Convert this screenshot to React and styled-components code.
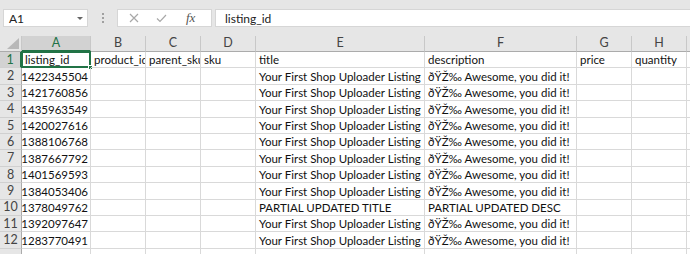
import React from "react";
import styled, { createGlobalStyle, css } from "styled-components";

const Global = createGlobalStyle`
  html, body { margin: 0; padding: 0; background: #fff; overflow: hidden; }
  #root { width: 690px; height: 254px; overflow: hidden; }
`;

const FONT = `"Lato", "Open Sans", sans-serif`;
const GREEN = "#217346";
const FS = "11.5px";

const Page = styled.div`
  width: 690px;
  height: 254px;
  overflow: hidden;
  display: flex;
  flex-direction: column;
  font-family: ${FONT};
  background: #fff;
`;

const TopBar = styled.div`
  flex: 0 0 36px;
  height: 36px;
  box-sizing: border-box;
  background: #e6e6e6;
  display: flex;
  align-items: flex-start;
  padding: 9px 0 0 3px;
`;

const NameBox = styled.div`
  width: 85px;
  height: 18px;
  box-sizing: border-box;
  background: #fff;
  border: 1px solid #d6d6d6;
  display: flex;
  align-items: center;
  justify-content: space-between;
  padding: 0 4px 0 5px;
  font-size: 12px;
  color: #222;
`;

const Caret = styled.span`
  width: 0;
  height: 0;
  border-left: 3px solid transparent;
  border-right: 3px solid transparent;
  border-top: 3px solid #666;
  margin-top: 1px;
`;

const Grip = styled.div`
  width: 29px;
  height: 18px;
  display: flex;
  flex-direction: column;
  align-items: center;
  justify-content: center;
  gap: 2px;
  & > i {
    width: 2px;
    height: 2px;
    background: #a0a0a0;
    display: block;
  }
`;

const FxBox = styled.div`
  width: 95px;
  height: 18px;
  box-sizing: border-box;
  background: #fff;
  border: 1px solid #d6d6d6;
  display: flex;
  align-items: center;
  padding-left: 11px;
  gap: 17px;
`;

const Fx = styled.span`
  font-family: "Liberation Serif", "DejaVu Serif", serif;
  font-style: italic;
  font-size: 13px;
  color: #555;
  margin-left: 2px;
`;

const FormulaInput = styled.div`
  flex: 1;
  margin-left: 3px;
  height: 18px;
  box-sizing: border-box;
  background: #fff;
  border: 1px solid #d6d6d6;
  border-right: none;
  display: flex;
  align-items: center;
  padding-left: 9px;
  font-size: 12px;
  color: #222;
`;

const Grid = styled.div`
  flex: 0 0 auto;
  display: grid;
  grid-template-columns: 22px 69px 55px 55px 55px 169px 152px 55px 55px 1fr;
  grid-template-rows: 16px;
  grid-auto-rows: 16.4px;
`;

const HeadCell = styled.div`
  background: ${(p) => (p.$active ? "#d2d2d2" : "#e6e6e6")};
  color: ${(p) => (p.$active ? GREEN : "#444")};
  border-right: 1px solid #c8c8c8;
  border-bottom: 1px solid #ababab;
  box-sizing: border-box;
  display: flex;
  align-items: center;
  justify-content: center;
  font-size: 12.5px;
  line-height: 1;
  ${(p) =>
    p.$active &&
    css`
      border-bottom: 2px solid ${GREEN};
    `}
`;

const Corner = styled(HeadCell)`
  position: relative;
  &::after {
    content: "";
    position: absolute;
    right: 2px;
    bottom: 2px;
    width: 0;
    height: 0;
    border-left: 12px solid transparent;
    border-bottom: 11px solid #b8b8b8;
  }
`;

const RowHead = styled.div`
  background: ${(p) => (p.$active ? "#d2d2d2" : "#e6e6e6")};
  color: ${(p) => (p.$active ? GREEN : "#444")};
  border-right: ${(p) => (p.$active ? `2px solid ${GREEN}` : "1px solid #ababab")};
  border-bottom: 1px solid #d0d0d0;
  box-sizing: border-box;
  display: flex;
  align-items: center;
  justify-content: center;
  padding-top: 1px;
  font-size: 12.5px;
  line-height: 1;
`;

const Cell = styled.div`
  border-right: 1px solid #d9d9d9;
  border-bottom: 1px solid #d9d9d9;
  box-sizing: border-box;
  overflow: hidden;
  white-space: nowrap;
  font-size: ${FS};
  line-height: 1;
  color: #111;
  display: flex;
  align-items: center;
  justify-content: ${(p) => (p.$num ? "flex-end" : "flex-start")};
  padding: ${(p) => (p.$num ? "1px 2px 0 0" : "1px 0 0 3px")};
  position: relative;
  ${(p) =>
    p.$selected &&
    css`
      overflow: visible;
      &::before {
        content: "";
        position: absolute;
        left: -1px;
        top: -1px;
        right: -1px;
        bottom: -1px;
        border: 2px solid ${GREEN};
        pointer-events: none;
      }
      &::after {
        content: "";
        position: absolute;
        right: -3px;
        bottom: -3px;
        width: 5px;
        height: 5px;
        background: ${GREEN};
        border: 1px solid #fff;
        box-sizing: border-box;
      }
    `}
`;

const TITLE = "Your First Shop Uploader Listing";
const DESC = "\u00F0\u0178\u017D\u2030 Awesome, you did it!";

const rows = [
  ["1422345504", TITLE, DESC],
  ["1421760856", TITLE, DESC],
  ["1435963549", TITLE, DESC],
  ["1420027616", TITLE, DESC],
  ["1388106768", TITLE, DESC],
  ["1387667792", TITLE, DESC],
  ["1401569593", TITLE, DESC],
  ["1384053406", TITLE, DESC],
  ["1378049762", "PARTIAL UPDATED TITLE", "PARTIAL UPDATED DESC"],
  ["1392097647", TITLE, DESC],
  ["1283770491", TITLE, DESC],
];

const letters = ["A", "B", "C", "D", "E", "F", "G", "H", ""];
const headerRow = ["listing_id", "product_id", "parent_sku", "sku", "title", "description", "price", "quantity", ""];

export default function App() {
  return (
    <Page>
      <Global />
      <TopBar>
        <NameBox>
          A1
          <Caret />
        </NameBox>
        <Grip>
          <i />
          <i />
          <i />
        </Grip>
        <FxBox>
          <svg width="10" height="10" viewBox="0 0 10 10">
            <path d="M1 1L9 9M9 1L1 9" stroke="#a8a8a8" strokeWidth="1.2" fill="none" />
          </svg>
          <svg width="11" height="9" viewBox="0 0 11 9">
            <path d="M1 4.5L4 7.5L10 1" stroke="#a8a8a8" strokeWidth="1.2" fill="none" />
          </svg>
          <Fx>fx</Fx>
        </FxBox>
        <FormulaInput>listing_id</FormulaInput>
      </TopBar>
      <Grid>
        <Corner />
        {letters.map((l, i) => (
          <HeadCell key={i} $active={i === 0}>
            {l}
          </HeadCell>
        ))}
        <RowHead $active>1</RowHead>
        {headerRow.map((t, i) => (
          <Cell key={i} $selected={i === 0}>
            {t}
          </Cell>
        ))}
        {rows.map((r, ri) => (
          <React.Fragment key={ri}>
            <RowHead>{ri + 2}</RowHead>
            <Cell $num>{r[0]}</Cell>
            <Cell />
            <Cell />
            <Cell />
            <Cell>{r[1]}</Cell>
            <Cell>{r[2]}</Cell>
            <Cell />
            <Cell />
            <Cell />
          </React.Fragment>
        ))}
        <RowHead />
        {letters.map((_, i) => (
          <Cell key={"x" + i} />
        ))}
      </Grid>
    </Page>
  );
}
